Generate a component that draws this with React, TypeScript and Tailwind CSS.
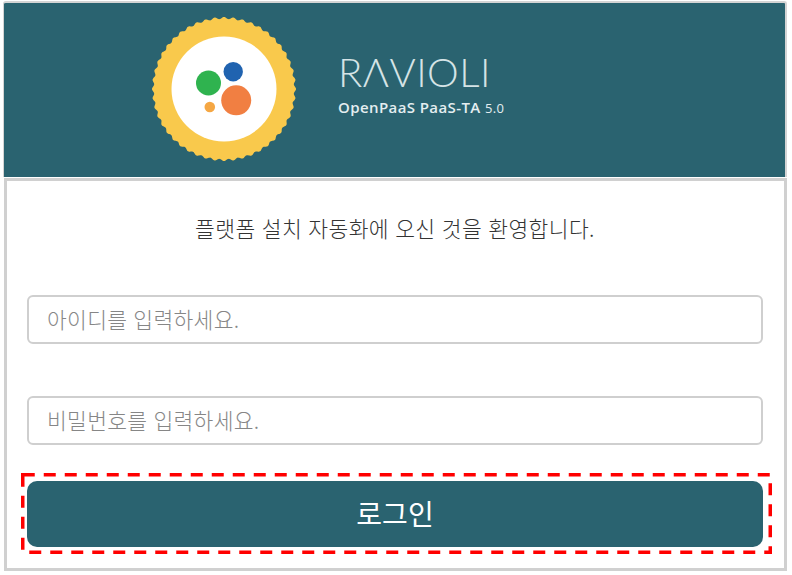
const scallop = Array.from({ length: 720 }, (_, i) => {
  const t = (i / 720) * Math.PI * 2;
  const r = 71 + 1 * Math.cos(48 * t);
  return `${(72 + r * Math.cos(t)).toFixed(2)},${(72 + r * Math.sin(t)).toFixed(2)}`;
}).join(" ");

function Badge() {
  return (
    <svg width="144" height="144" viewBox="0 0 144 144" className="shrink-0">
      <polygon points={scallop} fill="#f9c94c" />
      <circle cx="72" cy="72" r="52.5" fill="#ffffff" />
      <circle cx="56.5" cy="66" r="12.5" fill="#2fb34f" />
      <circle cx="81.2" cy="54.7" r="9.7" fill="#2063b0" />
      <circle cx="84.2" cy="83.3" r="15" fill="#f17f42" />
      <circle cx="57.8" cy="90" r="5.3" fill="#f5a744" />
    </svg>
  );
}

export default function App() {
  return (
    <div className="relative h-[575px] w-[792px] bg-white font-['Noto_Sans_CJK_KR','Noto_Sans',sans-serif]">
      <div className="ml-[3px] w-[784px] pt-[1px]">
        <div className="flex h-[176px] items-start rounded-t-[3px] border-t-2 border-r-2 border-l border-[#d4d4d4] bg-[#2a6370] pl-[148px] pt-[14px]">
          <Badge />
          <div className="ml-[42px] flex flex-col pt-[35px] text-[#e4eef0]">
            <div className="font-['Lato',sans-serif] text-[40px] leading-[40px] font-light tracking-[0.5px] text-[#d5e3e6]">RΛVIOLI</div>
            <div className="mt-[5px] font-['Open_Sans',sans-serif] text-[15px] leading-[20px] font-semibold tracking-[0.4px] whitespace-nowrap">
              OpenPaaS PaaS-TA <span className="text-[13px] font-medium">5.0</span>
            </div>
          </div>
        </div>
        <div className="mt-px ml-px h-[393px] border-[3px] border-[#d0d0d0] bg-white pt-[31px] pr-[21px] pl-[20px]">
          <p className="text-center text-[21.5px] leading-[32px] font-light tracking-[0.4px] [word-spacing:1px] text-[#333333]">플랫폼 설치 자동화에 오신 것을 환영합니다.</p>
          <input
            readOnly
            placeholder="아이디를 입력하세요."
            className="mt-[51px] block h-[49px] w-full rounded-[6px] border-2 border-[#cfcfcf] bg-white px-[18px] pb-[2px] text-[21.5px] font-light tracking-[0.3px] [word-spacing:1px] text-[#333333] outline-none placeholder:text-[#868686]"
          />
          <input
            readOnly
            placeholder="비밀번호를 입력하세요."
            className="mt-[52px] block h-[49px] w-full rounded-[6px] border-2 border-[#cfcfcf] bg-white px-[18px] pb-[2px] text-[21.5px] font-light tracking-[0.3px] [word-spacing:1px] text-[#333333] outline-none placeholder:text-[#868686]"
          />
          <button className="mt-[36px] block h-[66px] w-full rounded-[10px] bg-[#2a6370] pb-[2px] text-[28px] text-white">로그인</button>
        </div>
      </div>
      <svg className="pointer-events-none absolute left-[21px] top-[473px]" width="751" height="81" viewBox="0 0 751 81" fill="none">
        <rect x="1.75" y="1.75" width="747.5" height="77.5" stroke="#ff0000" strokeWidth="3.5" strokeDasharray="12 9" />
      </svg>
    </div>
  );
}
